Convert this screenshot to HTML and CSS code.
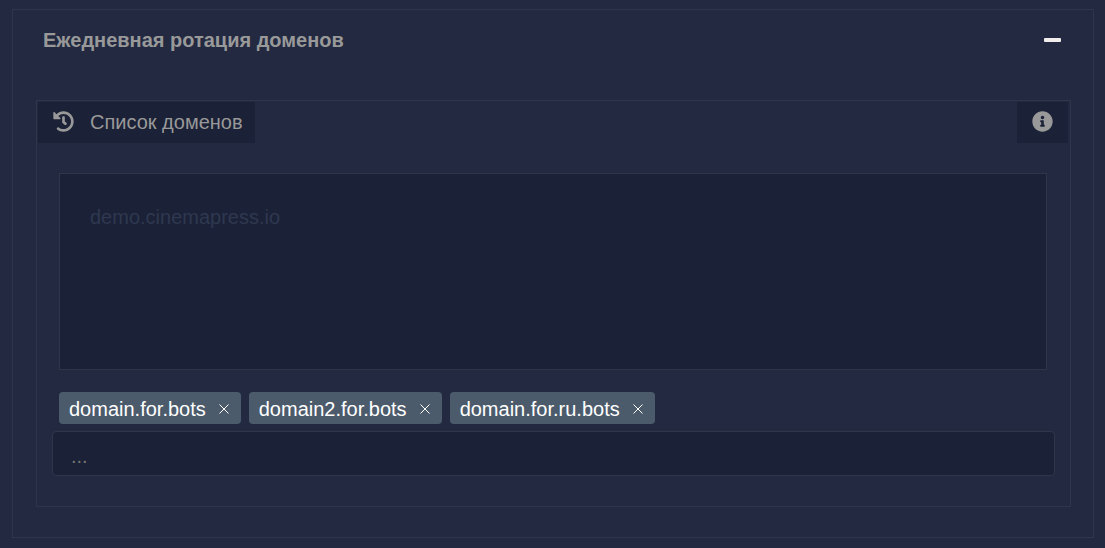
FILE: index.html
```html
<!DOCTYPE html>
<html lang="ru">
<head>
<meta charset="utf-8">
<meta name="viewport" content="width=device-width, initial-scale=1">
<title>Ежедневная ротация доменов</title>
<link rel="stylesheet" href="styles.css">
</head>
<body>
<section class="panel">
  <header class="panel-header">
    <h1 class="panel-title">Ежедневная ротация доменов</h1>
    <button class="collapse" type="button" aria-label="Свернуть"><svg class="icon-minus" viewBox="0 0 17 4" aria-hidden="true"><rect width="17" height="4" rx="1"/></svg></button>
  </header>
  <div class="group">
    <div class="group-header">
      <label class="group-label" for="domains">
        <svg class="icon" viewBox="0 0 512 512" aria-hidden="true"><path d="M504 255.531c.253 136.64-111.18 248.372-247.82 248.468-59.015.042-113.223-20.53-155.822-54.911-11.077-8.94-11.905-25.541-1.839-35.607l11.267-11.267c8.609-8.609 22.353-9.551 31.891-1.984C173.062 425.135 212.781 440 256 440c101.705 0 184-82.311 184-184 0-101.705-82.311-184-184-184-48.814 0-93.149 18.969-126.068 49.932l50.754 50.754c10.08 10.08 2.941 27.314-11.313 27.314H24c-8.837 0-16-7.163-16-16V38.627c0-14.254 17.234-21.393 27.314-11.314l49.372 49.372C129.209 34.136 189.552 8 256 8c136.81 0 247.747 110.78 248 247.531zm-180.912 78.784l9.823-12.63c8.138-10.463 6.253-25.542-4.21-33.679L288 256.349V152c0-13.255-10.745-24-24-24h-16c-13.255 0-24 10.745-24 24v135.651l65.409 50.874c10.463 8.137 25.541 6.253 33.679-4.21z"/></svg>
        <span>Список доменов</span>
      </label>
      <button class="info" type="button" aria-label="Информация"><svg class="icon" viewBox="0 0 512 512" aria-hidden="true"><path d="M256 8C119.043 8 8 119.083 8 256c0 136.997 111.043 248 248 248s248-111.003 248-248C504 119.083 392.957 8 256 8zm0 110c23.196 0 42 18.804 42 42s-18.804 42-42 42-42-18.804-42-42 18.804-42 42-42zm56 254c0 6.627-5.373 12-12 12h-88c-6.627 0-12-5.373-12-12v-24c0-6.627 5.373-12 12-12h12v-64h-12c-6.627 0-12-5.373-12-12v-24c0-6.627 5.373-12 12-12h64c6.627 0 12 5.373 12 12v100h12c6.627 0 12 5.373 12 12v24z"/></svg></button>
    </div>
    <textarea class="domains" id="domains" placeholder="demo.cinemapress.io"></textarea>
    <ul class="tags">
      <li class="tag"><span>domain.for.bots</span><button class="remove" type="button" aria-label="Удалить domain.for.bots"><svg class="icon-x" viewBox="0 0 10 10" aria-hidden="true"><path d="M.5.5l9 9M9.500.5l-9 9"/></svg></button></li>
      <li class="tag"><span>domain2.for.bots</span><button class="remove" type="button" aria-label="Удалить domain2.for.bots"><svg class="icon-x" viewBox="0 0 10 10" aria-hidden="true"><path d="M.5.5l9 9M9.500.5l-9 9"/></svg></button></li>
      <li class="tag"><span>domain.for.ru.bots</span><button class="remove" type="button" aria-label="Удалить domain.for.ru.bots"><svg class="icon-x" viewBox="0 0 10 10" aria-hidden="true"><path d="M.5.5l9 9M9.500.5l-9 9"/></svg></button></li>
    </ul>
    <input class="new-domain" type="text" placeholder="..." aria-label="Добавить домен">
  </div>
</section>
</body>
</html>
```

FILE: styles.css
```css
* {
  box-sizing: border-box;
}

body {
  margin: 0;
  padding: 9px 11px 9px 12px;
  background: #222941;
  color: #999;
  font: 20px/24px "Liberation Sans", Arial, sans-serif;
}

button {
  border: 0;
  padding: 0;
  background: none;
  color: inherit;
  cursor: pointer;
}

textarea,
input {
  display: block;
  background: #1b2136;
  border: 1px solid #2e374a;
  color: #fff;
  font: inherit;
  outline: 0;
}

.panel {
  border: 1px solid #2e374a;
  padding: 0 22px 30px 23px;
}

.panel-header {
  display: flex;
  align-items: center;
  justify-content: space-between;
  height: 60px;
  margin-bottom: 30px;
  padding: 0 10px 0 7px;
}

.panel-title {
  margin: 0;
  font-size: 20px;
}

.collapse {
  display: flex;
  color: #f2eded;
}

.icon-minus {
  width: 17px;
  height: 4px;
  fill: currentColor;
}

.group {
  border: 1px solid #2e374a;
  padding: 1px 2px 30px 1px;
}

.group-header {
  display: flex;
  justify-content: space-between;
  height: 41px;
}

.group-label,
.info {
  display: flex;
  align-items: center;
  padding: 0 15px 2px;
  background: #1b2136;
}

.group-label {
  gap: 16px;
  padding-right: 12px;
}

.icon {
  width: 21px;
  height: 21px;
  fill: currentColor;
}

.domains {
  width: calc(100% - 42px);
  height: 197px;
  margin: 30px 21px 22px;
  padding: 31px 30px 30px;
  resize: none;
}

.domains::placeholder {
  color: #2e3850;
}

.tags {
  display: flex;
  flex-wrap: wrap;
  gap: 8px;
  margin: 0 21px 7px;
  padding: 0;
  list-style: none;
}

.tag {
  display: flex;
  align-items: center;
  gap: 13px;
  height: 32px;
  padding: 2px 12px 0 10px;
  border-radius: 4px;
  background: #4c5b6b;
  color: #fff;
}

.remove {
  display: flex;
}

.icon-x {
  width: 10px;
  height: 10px;
  fill: none;
  stroke: currentColor;
}

.new-domain {
  width: calc(100% - 27px);
  height: 45px;
  margin: 0 13px 0 14px;
  padding: 6px 18px 0;
  border-radius: 4px;
}

.new-domain::placeholder {
  color: #757575;
}
```
